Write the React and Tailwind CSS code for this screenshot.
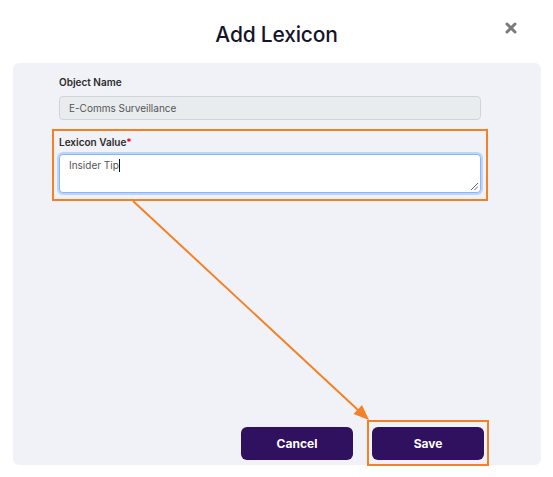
import { X } from 'lucide-react';

export default function App() {
  return (
    <div className="relative w-[553px] h-[477px] bg-white font-['Inter',sans-serif] overflow-hidden">
      {/* Header */}
      <div className="relative h-[63px] flex justify-center pt-[22px]">
        <h1 className="text-[21px] leading-[26px] font-medium text-[#14142b] tracking-[-0.2px]">
          Add Lexicon
        </h1>
        <button className="absolute right-[34px] top-[20px] text-[#7a7a7a]">
          <X size={16} strokeWidth={4.5} />
        </button>
      </div>

      {/* Body panel */}
      <div className="ml-[13px] w-[528px] h-[402px] rounded-[6px] bg-[#f1f2f7] flex flex-col">
        <div className="ml-[46px] w-[422px] pt-[12px]">
          <label className="block text-[10px] leading-[14px] font-semibold text-[#2b2b2b]">
            Object Name
          </label>
          <div className="mt-[7px] h-[24px] rounded-[4px] border border-[#d0d4d9] bg-[#e9ecef] pl-[9px] flex items-center text-[10px] text-[#555]">
            E-Comms Surveillance
          </div>

          <div className="relative mt-[15px]">
            <label className="block text-[10px] leading-[14px] font-semibold text-[#2b2b2b]">
              Lexicon Value<span className="text-[#e0001b]">*</span>
            </label>
            <div className="relative mt-[5px] h-[39px] rounded-[4px] border border-[#86b7fe] bg-white shadow-[0_0_0_2px_rgba(13,110,253,0.22)] pl-[9px] pt-[2px] text-[10px] leading-[16px] text-[#555]">
              Insider Tip<span className="inline-block w-px h-[13px] bg-[#111] align-[-3px]" />
              <svg className="absolute right-[2px] bottom-[2px]" width="7" height="7" viewBox="0 0 7 7">
                <path d="M7 0 L0 7 M7 3.5 L3.5 7" stroke="#666" strokeWidth="1" />
              </svg>
            </div>
            <div className="absolute -left-[7px] -right-[7px] -top-[6px] -bottom-[8px] border-2 border-[#f58025] pointer-events-none" />
          </div>
        </div>

        <div className="flex-1" />

        <div className="flex justify-end gap-[19px] pr-[57px] pb-[5px]">
          <button className="w-[112px] h-[33px] rounded-[6px] bg-[#2f1160] text-white text-[12px] font-bold">
            Cancel
          </button>
          <div className="relative">
            <button className="w-[112px] h-[33px] rounded-[6px] bg-[#2f1160] text-white text-[12px] font-bold">
              Save
            </button>
            <div className="absolute -left-[5px] -right-[5px] -top-[7px] -bottom-[6px] border-2 border-[#f58025] pointer-events-none" />
          </div>
        </div>
      </div>

      {/* Annotation arrow */}
      <svg className="absolute inset-0 pointer-events-none" width="553" height="477">
        <line x1="133" y1="201" x2="358" y2="410" stroke="#f58025" strokeWidth="2" />
        <polygon points="369,420 353.5,414 362,405" fill="#f58025" />
      </svg>
    </div>
  );
}
